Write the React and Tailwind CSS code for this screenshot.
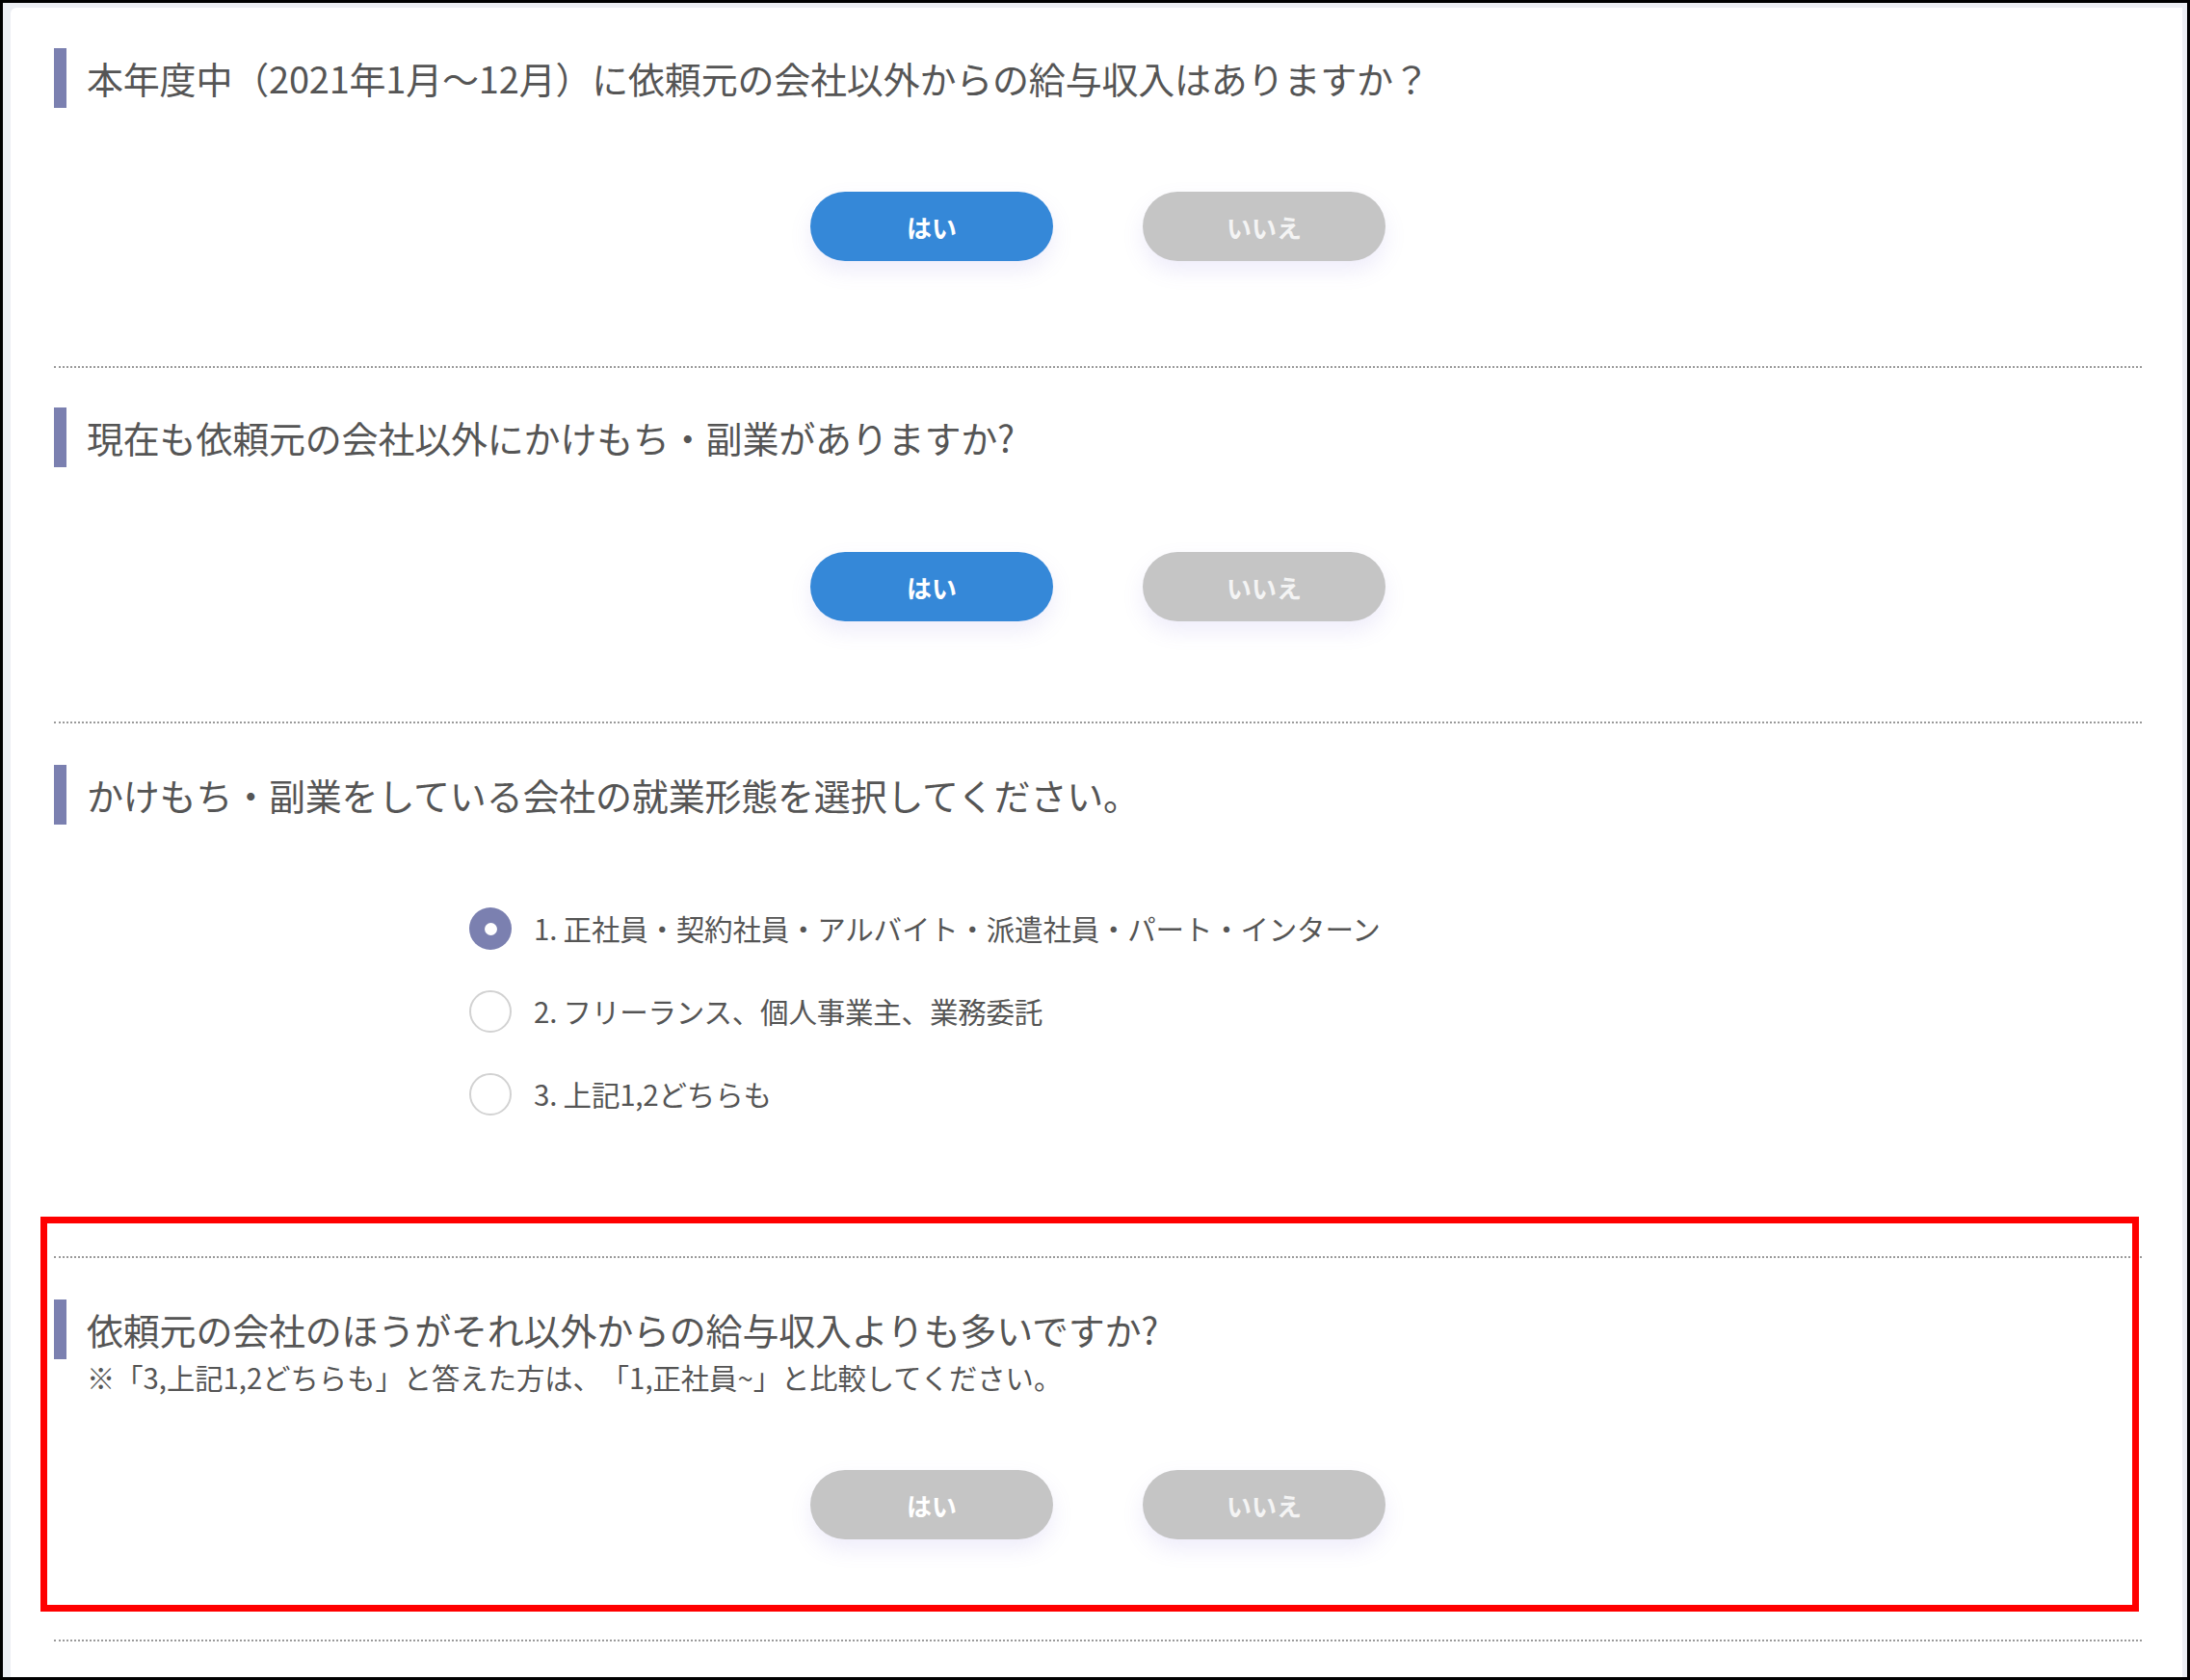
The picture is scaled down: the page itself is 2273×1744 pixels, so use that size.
import React from 'react';

const font = { fontFamily: '"Noto Sans CJK JP", "Noto Sans", sans-serif' };

const Heading = ({ children }) => (
  <div className="flex items-center h-[62px]">
    <div className="w-[13px] h-full bg-[#7b80b0] shrink-0" />
    <h2 className="ml-[21px] text-[38px] leading-none text-[#555555] font-normal tracking-[-0.2px] [text-spacing-trim:space-all]">
      {children}
    </h2>
  </div>
);

const Buttons = ({ active }) => (
  <div className="flex justify-center gap-[93px]">
    <button
      className={
        'w-[252px] h-[72px] rounded-full text-[26px] font-bold text-white shadow-[0_10px_22px_rgba(120,105,220,0.13)] ' +
        (active ? 'bg-[#3588d8]' : 'bg-[#c5c5c5] text-[#f4f4f4]')
      }
    >
      はい
    </button>
    <button className="w-[252px] h-[72px] rounded-full text-[26px] font-bold bg-[#c5c5c5] text-[#f4f4f4] shadow-[0_10px_22px_rgba(120,105,220,0.13)]">
      いいえ
    </button>
  </div>
);

const Divider = () => <div className="border-t-2 border-dotted border-[#9a9a9a]" />;

const Radio = ({ checked, label }) => (
  <div className="flex items-center h-[44px]">
    {checked ? (
      <span className="w-[44px] h-[44px] rounded-full bg-[#7b80b0] flex items-center justify-center shrink-0">
        <span className="w-[13px] h-[13px] rounded-full bg-white" />
      </span>
    ) : (
      <span className="w-[44px] h-[44px] rounded-full border-2 border-[#d2d2d2] bg-white shrink-0" />
    )}
    <span className="ml-[23px] text-[29.5px] leading-none text-[#555555] tracking-[-0.2px] [text-spacing-trim:space-all]">{label}</span>
  </div>
);

export default function App() {
  return (
    <div className="relative w-[2273px] h-[1744px] border-[3px] border-black bg-[#eceef3] pt-[5px] pl-[8px] pr-[5px]" style={font}>
      <div className="h-full bg-white rounded-tl-md pl-[45px] pr-[42px] pt-[42px]">
        {/* Q1 */}
        <Heading>本年度中（2021年1月～12月）に依頼元の会社以外からの給与収入はありますか？</Heading>
        <div className="mt-[87px]">
          <Buttons active />
        </div>
        <div className="mt-[109px]">
          <Divider />
        </div>

        {/* Q2 */}
        <div className="mt-[41px]">
          <Heading>現在も依頼元の会社以外にかけもち・副業がありますか?</Heading>
        </div>
        <div className="mt-[88px]">
          <Buttons active />
        </div>
        <div className="mt-[104px]">
          <Divider />
        </div>

        {/* Q3 */}
        <div className="mt-[43px]">
          <Heading>かけもち・副業をしている会社の就業形態を選択してください。</Heading>
        </div>
        <div className="mt-[86px] ml-[431px] flex flex-col gap-[42px]">
          <Radio checked label="1. 正社員・契約社員・アルバイト・派遣社員・パート・インターン" />
          <Radio label="2. フリーランス、個人事業主、業務委託" />
          <Radio label="3. 上記1,2どちらも" />
        </div>
        <div className="mt-[146px]">
          <Divider />
        </div>

        {/* Q4 */}
        <div className="mt-[43px]">
          <Heading>依頼元の会社のほうがそれ以外からの給与収入よりも多いですか?</Heading>
        </div>
        <p className="pl-[34px] mt-[2px] text-[29.3px] leading-[32px] text-[#555555] [text-spacing-trim:space-all]">
          ※「3,上記1,2どちらも」と答えた方は、「1,正社員~」と比較してください。
        </p>
        <div className="mt-[81px]">
          <Buttons />
        </div>
        <div className="mt-[104px]">
          <Divider />
        </div>
      </div>

      {/* annotation box */}
      <div className="absolute left-[39px] top-[1260px] w-[2178px] h-[410px] border-[7px] border-[#ff0000] pointer-events-none" />
    </div>
  );
}
